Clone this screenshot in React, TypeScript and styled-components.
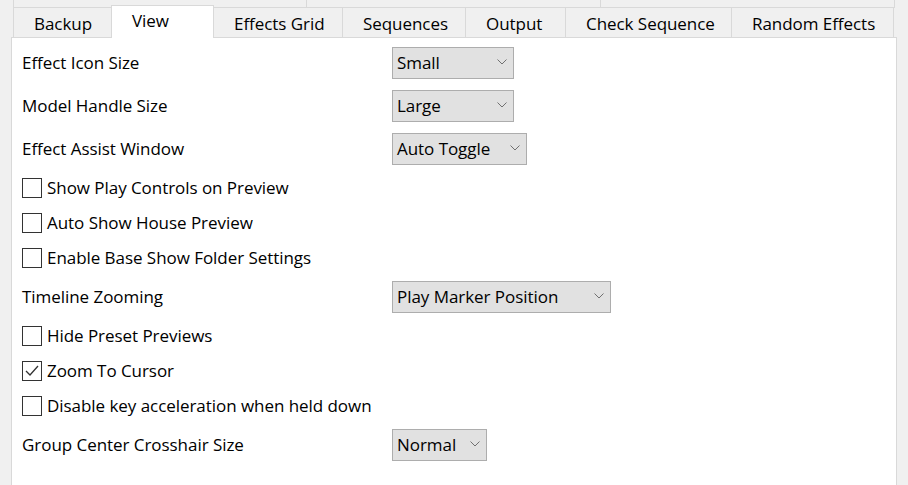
import React from "react";
import styled, { createGlobalStyle } from "styled-components";

const GlobalStyle = createGlobalStyle`
  html, body {
    margin: 0;
    padding: 0;
    background: #f0f0f0;
  }
  body {
    font-family: "Open Sans", "Noto Sans", "Liberation Sans", sans-serif;
    font-size: 17px;
    letter-spacing: -0.05px;
    color: #000;
  }
  * { box-sizing: border-box; }
`;

const Window = styled.div`
  width: 908px;
  height: 485px;
  overflow: hidden;
  display: flex;
  flex-direction: column;
  background: #f0f0f0;
`;

const UpperStrip = styled.div`
  display: flex;
  height: 8px;
  padding-left: 13px;
  flex-shrink: 0;
`;

const Stub = styled.div<{ $w: number; $last?: boolean }>`
  width: ${(p) => p.$w}px;
  height: 8px;
  border-left: 1px solid #d9d9d9;
  border-bottom: 1px solid #d9d9d9;
  border-right: ${(p) => (p.$last ? "1px solid #d9d9d9" : "none")};
  background: #f0f0f0;
`;

const TabStrip = styled.div`
  display: flex;
  height: 29px;
  padding-left: 13px;
  flex-shrink: 0;
  position: relative;
  z-index: 1;
`;

const Tab = styled.div<{ $w: number; $selected?: boolean; $last?: boolean }>`
  width: ${(p) => p.$w}px;
  padding-left: 20px;
  white-space: nowrap;
  display: flex;
  align-items: center;
  border-left: 1px solid #d9d9d9;
  border-right: ${(p) => (p.$last || p.$selected ? "1px solid #d9d9d9" : "none")};
  background: ${(p) => (p.$selected ? "#ffffff" : "#f0f0f0")};
  ${(p) =>
    p.$selected
      ? `
    margin-top: -3px;
    height: 33px;
    margin-right: -1px;
    border-top: 1px solid #d9d9d9;
    padding-bottom: 3px;
    position: relative;
    z-index: 2;
  `
      : `
    height: 29px;
    padding-top: 1px;
  `}
`;

const Panel = styled.div`
  flex: 1;
  margin-left: 11px;
  width: 886px;
  background: #ffffff;
  border: 1px solid #d9d9d9;
  border-bottom: none;
  padding: 3px 0 0 10px;
  display: flex;
  flex-direction: column;
`;

const ChoiceRow = styled.div`
  display: grid;
  grid-template-columns: 370px auto;
  align-items: center;
  height: 43px;
`;

const Label = styled.div`
  white-space: nowrap;
`;

const Select = styled.div<{ $w: number }>`
  width: ${(p) => p.$w}px;
  height: 32px;
  background: #e1e1e1;
  border: 1px solid #adadad;
  display: flex;
  align-items: center;
  justify-content: space-between;
  padding: 0 6px 1px 4px;
  white-space: nowrap;
`;

const Chevron = styled.svg`
  width: 10px;
  height: 6px;
  flex-shrink: 0;
`;

const CheckRow = styled.div`
  display: flex;
  align-items: center;
  height: 35px;
  gap: 5px;
`;

const Box = styled.div`
  width: 20px;
  height: 20px;
  border: 1px solid #333333;
  background: #ffffff;
  display: flex;
  align-items: center;
  justify-content: center;
  flex-shrink: 0;
`;

const Choice = ({ label, value, w }: { label: string; value: string; w: number }) => (
  <ChoiceRow>
    <Label>{label}</Label>
    <Select $w={w}>
      <span>{value}</span>
      <Chevron viewBox="0 0 10 6">
        <polyline points="0.5,0.5 5,5 9.5,0.5" fill="none" stroke="#707070" strokeWidth="1" />
      </Chevron>
    </Select>
  </ChoiceRow>
);

const Check = ({ label, checked }: { label: string; checked?: boolean }) => (
  <CheckRow>
    <Box>
      {checked && (
        <svg width="14" height="12" viewBox="0 0 14 12">
          <polyline points="1,6 5,10 13,1" fill="none" stroke="#333333" strokeWidth="1.3" />
        </svg>
      )}
    </Box>
    <Label>{label}</Label>
  </CheckRow>
);

const tabs = [
  { name: "Backup", w: 98 },
  { name: "View", w: 103, selected: true },
  { name: "Effects Grid", w: 129 },
  { name: "Sequences", w: 123 },
  { name: "Output", w: 100 },
  { name: "Check Sequence", w: 166 },
  { name: "Random Effects", w: 163, last: true },
];

export default function App() {
  return (
    <>
      <GlobalStyle />
      <Window>
        <UpperStrip>
          <Stub $w={293} />
          <Stub $w={294} />
          <Stub $w={295} $last />
        </UpperStrip>
        <TabStrip>
          {tabs.map((t) => (
            <Tab key={t.name} $w={t.w} $selected={t.selected} $last={t.last}>
              {t.name}
            </Tab>
          ))}
        </TabStrip>
        <Panel>
          <Choice label="Effect Icon Size" value="Small" w={122} />
          <Choice label="Model Handle Size" value="Large" w={122} />
          <Choice label="Effect Assist Window" value="Auto Toggle" w={135} />
          <Check label="Show Play Controls on Preview" />
          <Check label="Auto Show House Preview" />
          <Check label="Enable Base Show Folder Settings" />
          <Choice label="Timeline Zooming" value="Play Marker Position" w={219} />
          <Check label="Hide Preset Previews" />
          <Check label="Zoom To Cursor" checked />
          <Check label="Disable key acceleration when held down" />
          <Choice label="Group Center Crosshair Size" value="Normal" w={95} />
        </Panel>
      </Window>
    </>
  );
}
